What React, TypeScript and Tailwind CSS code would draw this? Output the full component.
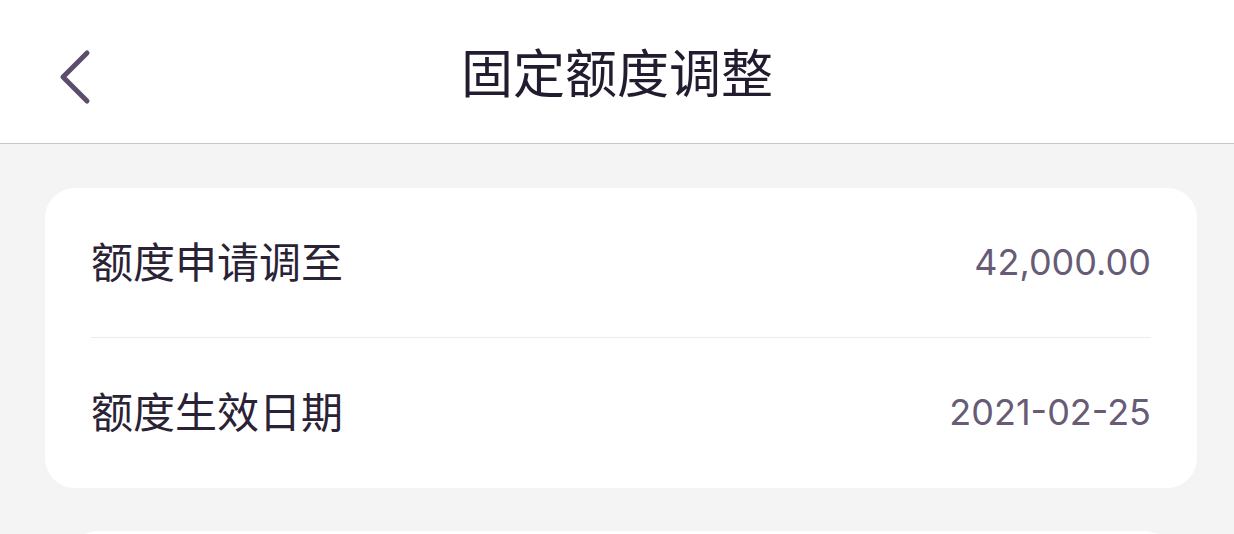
import React from "react";

const font = { fontFamily: '"Noto Sans CJK SC", "Noto Sans", sans-serif' };

const rows = [
  { label: "额度申请调至", value: "42,000.00" },
  { label: "额度生效日期", value: "2021-02-25" },
];

const App = () => {
  return (
    <div className="w-[1234px] h-[534px] bg-[#f4f4f4] overflow-hidden" style={font}>
      {/* header */}
      <header className="relative h-[144px] bg-white border-b border-[#c8c8c8] flex items-center justify-center">
        <button className="absolute left-[54px] top-[48px] w-[40px] h-[58px] flex items-center justify-center">
          <svg width="36" height="58" viewBox="0 0 36 58" fill="none">
            <path d="M31 5 L7 29 L31 53" stroke="#5b4d6b" strokeWidth="5" strokeLinecap="round" strokeLinejoin="round" />
          </svg>
        </button>
        <h1 className="text-[52px] leading-none text-[#231b2e] font-normal pb-[2px]">固定额度调整</h1>
      </header>

      {/* card */}
      <div className="ml-[45px] mr-[37px] mt-[44px] bg-white rounded-[30px] pl-[46px] pr-[46px]">
        {rows.map((r, i) => (
          <div
            key={r.label}
            className={`h-[150px] flex items-center justify-between ${i === 0 ? "border-b border-[#ececec]" : ""}`}
          >
            <span className="text-[42px] text-[#2a2235] leading-none pb-[6px]">{r.label}</span>
            <span className="text-[36px] text-[#675b76] leading-none pb-[2px]" style={{ fontFamily: '"Inter", "Noto Sans", sans-serif' }}>
              {r.value}
            </span>
          </div>
        ))}
      </div>

      {/* next card peeking */}
      <div className="ml-[68px] mr-[60px] mt-[43px] h-[40px] bg-white rounded-t-[30px]" />
    </div>
  );
};

export default App;
